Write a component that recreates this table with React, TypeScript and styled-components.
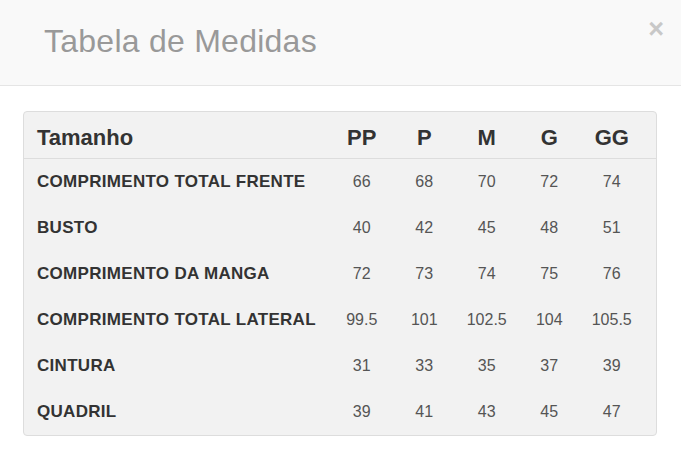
import React from "react";
import styled, { createGlobalStyle } from "styled-components";

const Global = createGlobalStyle`
  html, body { margin: 0; padding: 0; background: #fff; }
  body { font-family: "Liberation Sans", Arial, sans-serif; }
`;

const Modal = styled.div`
  width: 681px;
  min-height: 457px;
  background: #fff;
`;

const Header = styled.header`
  display: flex;
  align-items: flex-start;
  height: 85px;
  box-sizing: content-box;
  padding: 0 17px 0 44px;
  background: #f9f9f9;
  border-bottom: 1px solid #e5e5e5;
`;

const Title = styled.h4`
  flex: 1;
  margin: 25px 0 0;
  font-size: 32px;
  line-height: 32px;
  font-weight: normal;
  letter-spacing: 0.25px;
  color: #999;
`;

const Close = styled.button`
  margin-top: 16px;
  padding: 0;
  border: 0;
  background: transparent;
  font-family: "Liberation Sans", Arial, sans-serif;
  font-size: 27px;
  line-height: 27px;
  font-weight: bold;
  color: #c8c8c8;
  cursor: pointer;
`;

const Body = styled.div`
  padding: 25px 24px 0 23px;
`;

const Table = styled.div`
  border: 1px solid #ddd;
  border-radius: 4px;
  background: #f2f2f2;
  overflow: hidden;
`;

const Row = styled.div<{ $head?: boolean }>`
  display: grid;
  grid-template-columns: 1fr repeat(5, 62.5px);
  align-items: center;
  height: ${(p) => (p.$head ? "47px" : "46px")};
  box-sizing: border-box;
  padding: ${(p) => (p.$head ? "6px 13px 0 13px" : "0 13px")};
  border-bottom: ${(p) => (p.$head ? "1px solid #ddd" : "0")};
  color: #333;
`;

const HeadCell = styled.div<{ $center?: boolean }>`
  font-size: 22px;
  font-weight: bold;
  text-align: ${(p) => (p.$center ? "center" : "left")};
  color: #333;
`;

const Label = styled.div`
  font-size: 17px;
  font-weight: bold;
  letter-spacing: 0.3px;
  color: #333;
  white-space: nowrap;
`;

const Value = styled.div`
  font-size: 16px;
  text-align: center;
  color: #555;
`;

const sizes = ["PP", "P", "M", "G", "GG"];
const rows: [string, string[]][] = [
  ["COMPRIMENTO TOTAL FRENTE", ["66", "68", "70", "72", "74"]],
  ["BUSTO", ["40", "42", "45", "48", "51"]],
  ["COMPRIMENTO DA MANGA", ["72", "73", "74", "75", "76"]],
  ["COMPRIMENTO TOTAL LATERAL", ["99.5", "101", "102.5", "104", "105.5"]],
  ["CINTURA", ["31", "33", "35", "37", "39"]],
  ["QUADRIL", ["39", "41", "43", "45", "47"]],
];

export default function App() {
  return (
    <Modal>
      <Global />
      <Header>
        <Title>Tabela de Medidas</Title>
        <Close aria-label="Fechar">×</Close>
      </Header>
      <Body>
        <Table>
          <Row $head>
            <HeadCell>Tamanho</HeadCell>
            {sizes.map((s) => (
              <HeadCell key={s} $center>
                {s}
              </HeadCell>
            ))}
          </Row>
          {rows.map(([label, vals]) => (
            <Row key={label}>
              <Label>{label}</Label>
              {vals.map((v, i) => (
                <Value key={i}>{v}</Value>
              ))}
            </Row>
          ))}
        </Table>
      </Body>
    </Modal>
  );
}
